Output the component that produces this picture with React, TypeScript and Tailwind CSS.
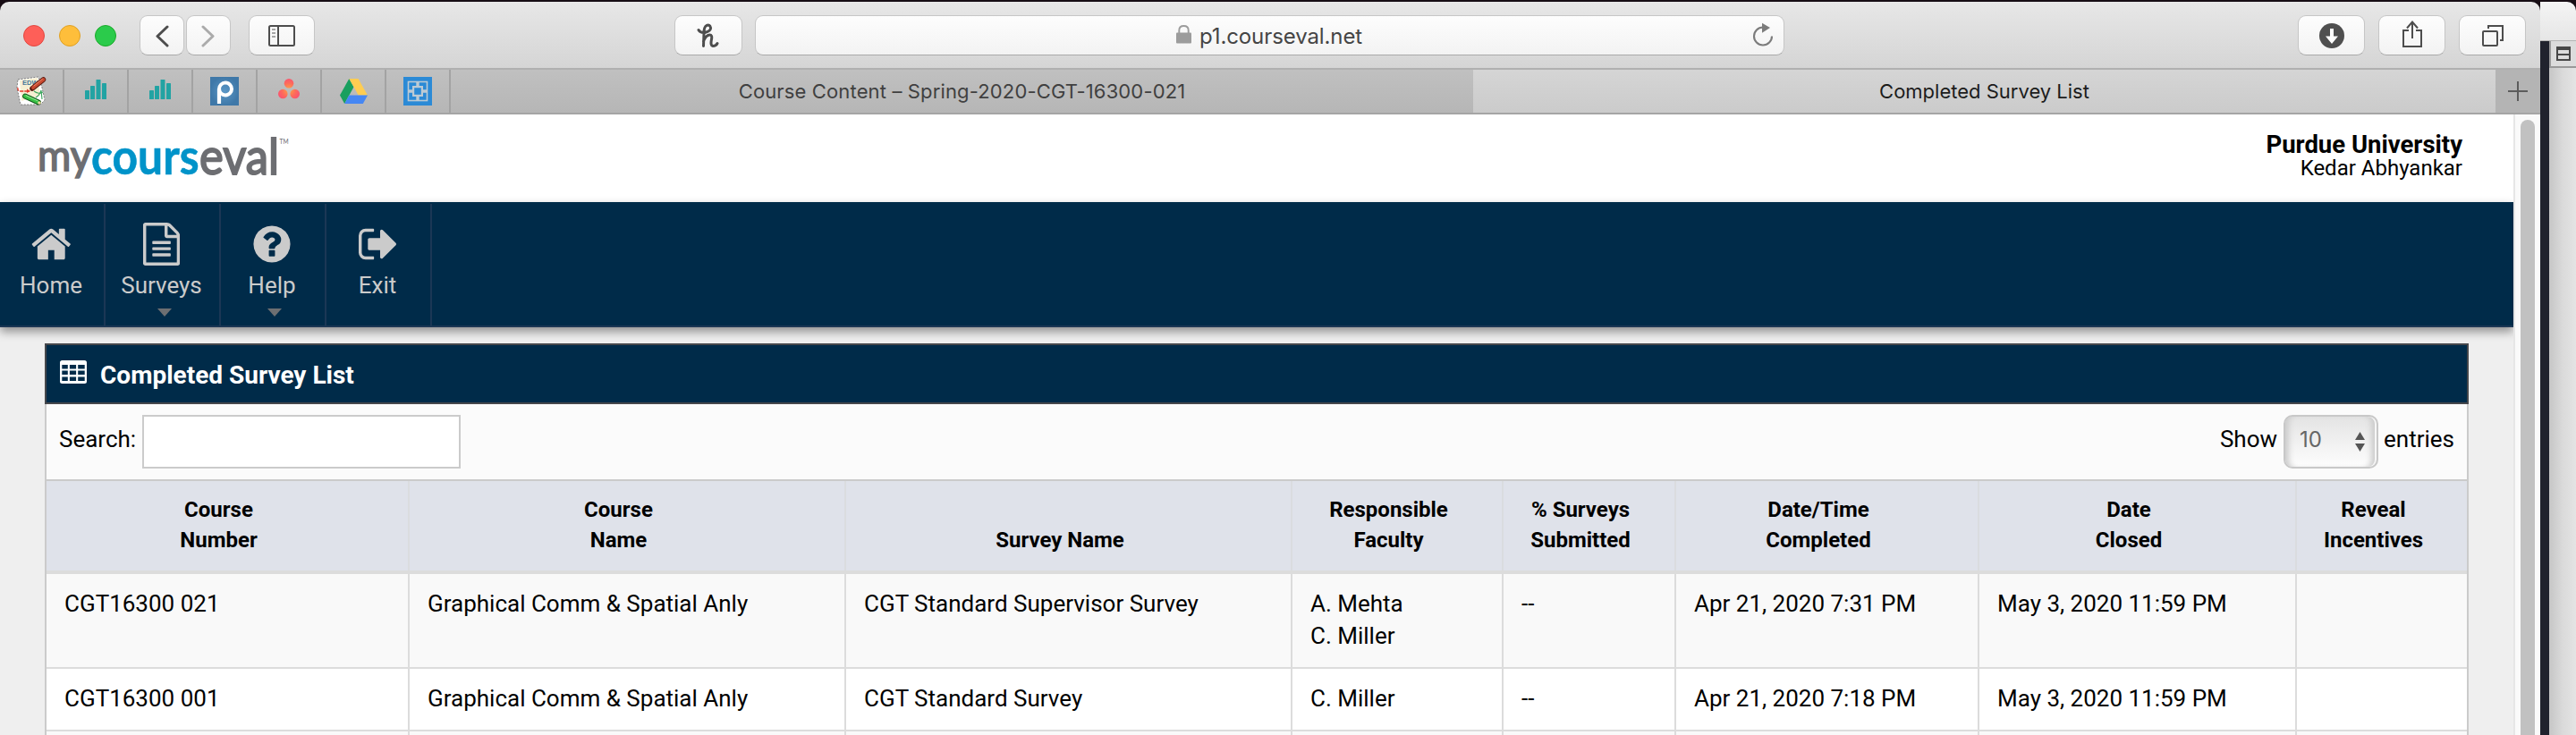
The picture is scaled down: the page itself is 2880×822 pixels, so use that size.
import React from "react";

const btn =
  "flex h-[45px] shrink-0 items-center justify-center rounded-[9px] border border-[#c6c6c6] border-b-[#a9a9a9] bg-linear-to-b from-[#fdfdfd] to-[#f3f3f3]";

const tabIcon =
  "flex w-[72px] shrink-0 items-center justify-center border-r-2 border-[#a3a3a3]";

function BarsIcon() {
  return (
    <svg width="24" height="22" viewBox="0 0 24 22" fill="#22a3a3" className="-mt-1">
      <rect x="0" y="12" width="5" height="10" rx=".6" />
      <rect x="6" y="7" width="5" height="15" rx=".6" />
      <rect x="12.500" y="0" width="5" height="22" rx=".6" />
      <rect x="19" y="4" width="5" height="18" rx=".6" />
    </svg>
  );
}

function EdwIcon() {
  return (
    <svg width="34" height="34" viewBox="0 0 34 34">
      <path d="M2 4 25 1l4 12 3 14-5 5H5L1 13z" fill="#fff" stroke="#555" strokeWidth=".7" strokeDasharray="2 1.500" />
      <path d="M4 5 24 2l3 20-21 6z" fill="#f6efd2" />
      <text x="7" y="9.500" fontSize="7.500" fontWeight="700" fontFamily="Liberation Sans, sans-serif" fill="#47789a">EDW</text>
      <path d="M2 13q-1 4 4 4h9" fill="none" stroke="#e2382a" strokeWidth="1.300" strokeDasharray="4 1" />
      <path d="M12 14.500 16 17l-4 2z" fill="#e2382a" />
      <path d="M20 17q5 4 10 1M22 24q4-2 6-8l1 10" fill="none" stroke="#3aa55c" strokeWidth="1.100" />
      <path d="M18 14 30.500 4" stroke="#5a1a10" strokeWidth="5.500" strokeLinecap="round" />
      <path d="M19 13 30.500 4" stroke="#c9492f" strokeWidth="3.800" strokeLinecap="round" />
      <path d="M20 11 29.500 3.300" stroke="#e98a6d" strokeWidth="1" strokeLinecap="round" />
      <path d="M10 22.500 25 29.500" stroke="#135a1c" strokeWidth="5.800" strokeLinecap="round" />
      <path d="M10 22.500 24 29" stroke="#38c044" strokeWidth="4" strokeLinecap="round" />
      <path d="M11 21.700 24 27.700" stroke="#9cee9c" strokeWidth="1" strokeLinecap="round" />
      <circle cx="26" cy="30" r="1.800" fill="#f1d9a0" />
    </svg>
  );
}

function PIcon() {
  return (
    <svg width="32" height="32" viewBox="0 0 32 32">
      <defs>
        <radialGradient id="pg">
          <stop offset="0" stopColor="#5a97c6" />
          <stop offset="1" stopColor="#3f78a8" />
        </radialGradient>
      </defs>
      <rect width="32" height="32" fill="url(#pg)" />
      <circle cx="17" cy="13.500" r="7" fill="none" stroke="#fff" strokeWidth="4" />
      <path d="M10 13.500V30" stroke="#fff" strokeWidth="4.200" />
    </svg>
  );
}

function DotsIcon() {
  return (
    <svg width="24" height="23" viewBox="0 0 24 23" className="-mt-[5px]">
      <defs>
        <radialGradient id="dg" gradientUnits="userSpaceOnUse" cx="12" cy="12.500" r="13">
          <stop offset="0" stopColor="#ffa642" />
          <stop offset=".6" stopColor="#fd6a5c" />
          <stop offset="1" stopColor="#f95470" />
        </radialGradient>
      </defs>
      <g fill="url(#dg)">
        <circle cx="12" cy="5.300" r="5.300" />
        <circle cx="5.300" cy="17" r="5.300" />
        <circle cx="18.700" cy="17" r="5.300" />
      </g>
    </svg>
  );
}

function DriveIcon() {
  return (
    <svg width="31" height="28" viewBox="0 0 31 28">
      <path d="M10.300 0 0 18.500 5.200 28 15.500 9.200z" fill="#189f5f" />
      <path d="M10.300 0h10.300L31 18.500H20.700z" fill="#fecd52" />
      <path d="M10.200 18.500H31L25.800 28H5.200z" fill="#4687f3" />
    </svg>
  );
}

function GridIcon() {
  return (
    <svg width="32" height="32" viewBox="0 0 32 32" fill="#2b8ad6">
      <rect width="32" height="32" />
      <rect x="4.700" y="4.700" width="22.600" height="22.600" fill="#bccad4" />
      <path d="M6.300 6.300h8V10H10v4.300H6.300zM25.700 6.300h-8V10H22v4.300h3.700zM6.300 25.700h8V22H10v-4.300H6.300zM25.700 25.700h-8V22H22v-4.300h3.700z" />
      <rect x="12.200" y="12.200" width="7.600" height="7.600" />
    </svg>
  );
}

const glyphs: Record<string, { w: number; d: string }> = {
  home: {
    w: 1664,
    d: "M1408 992v480q0 26-19 45t-45 19h-384v-384h-256v384h-384q-26 0-45-19t-19-45v-480q0-1 .5-3t.5-3l575-474 575 474q1 2 1 6zm223-69l-62 74q-8 9-21 11h-3q-13 0-21-7l-692-577-692 577q-12 8-24 7-13-2-21-11l-62-74q-8-10-7-23.5t11-21.5l719-599q32-26 76-26t76 26l244 204v-195q0-14 9-23t23-9h192q14 0 23 9t9 23v408l219 182q10 8 11 21.5t-7 23.5z",
  },
  file: {
    w: 1536,
    d: "M1468 380q28 28 48 76t20 88v1152q0 40-28 68t-68 28h-1344q-40 0-68-28t-28-68v-1600q0-40 28-68t68-28h896q40 0 88 20t76 48zm-444-244v376h376q-10-29-22-41l-313-313q-12-12-41-22zm384 1528v-1024h-416q-40 0-68-28t-28-68v-416h-768v1536h1280zm-1024-864q0-14 9-23t23-9h704q14 0 23 9t9 23v64q0 14-9 23t-23 9h-704q-14 0-23-9t-9-23v-64zm736 224q14 0 23 9t9 23v64q0 14-9 23t-23 9h-704q-14 0-23-9t-9-23v-64q0-14 9-23t23-9h704zm0 256q14 0 23 9t9 23v64q0 14-9 23t-23 9h-704q-14 0-23-9t-9-23v-64q0-14 9-23t23-9h704z",
  },
  help: {
    w: 1792,
    d: "M1024 1376v-192q0-14-9-23t-23-9h-192q-14 0-23 9t-9 23v192q0 14 9 23t23 9h192q14 0 23-9t9-23zm256-672q0-88-55.5-163t-138.5-116-170-41q-243 0-371 213-15 24 8 42l132 100q7 6 19 6 16 0 25-12 53-68 86-92 34-24 86-24 48 0 85.5 26t37.5 59q0 38-20 61t-68 45q-63 28-115.5 86.500t-52.500 125.500v36q0 14 9 23t23 9h192q14 0 23-9t9-23q0-19 21.500-49.500t54.500-49.500q32-18 49-28.500t46-35 44.500-48 28-60.500 12.500-81zm384 192q0 209-103 385.500t-279.500 279.500-385.500 103-385.500-103-279.500-279.500-103-385.500 103-385.500 279.500-279.500 385.500-103 385.500 103 279.500 279.500 103 385.500z",
  },
  exit: {
    w: 1568,
    d: "M640 1440q0 4 1 20t.5 26.5-3 23.5-10 19.5-20.5 6.5h-320q-119 0-203.5-84.5t-84.5-203.5v-704q0-119 84.5-203.5t203.5-84.5h320q13 0 22.5 9.5t9.5 22.5q0 4 1 20t.5 26.5-3 23.5-10 19.5-20.5 6.5h-320q-66 0-113 47t-47 113v704q0 66 47 113t113 47h312l11.5 1 11.5 3 8 5.5 7 9 2 13.5zm928-544q0 26-19 45l-544 544q-19 19-45 19t-45-19-19-45v-288h-448q-26 0-45-19t-19-45v-384q0-26 19-45t45-19h448v-288q0-26 19-45t45-19 45 19l544 544q19 19 19 45z",
  },
};

function NavItem({ icon, label, width, caret }: { icon: string; label: string; width: string; caret?: boolean }) {
  const g = glyphs[icon];
  return (
    <div className={`${width} flex h-full shrink-0 flex-col items-center border-r-2 border-[#1b3755] pt-[21px] pr-[2px]`}>
      <svg height="48" width={(g.w * 48) / 1792} viewBox={`0 0 ${g.w} 1792`} fill="#cbcbcb" className="shrink-0">
        <path d={g.d} />
      </svg>
      <span className="mt-[7px] text-[26px] leading-[30px] text-[#cbcbcb]">{label}</span>
      {caret && (
        <svg width="16" height="9" viewBox="0 0 16 9" fill="#6d6f72" className="mt-[11px] ml-[6px] shrink-0">
          <path d="M0 0h16L8 9z" />
        </svg>
      )}
    </div>
  );
}

function Logo() {
  return (
    <svg width="284" height="88" viewBox="40 128 284 88" className="shrink-0 overflow-visible" fontFamily="Lato, sans-serif">
      <text x="42" y="190.500" fontSize="49" fill="#6d6e72" stroke="#6d6e72" strokeWidth="1.700" textLength="60" lengthAdjust="spacingAndGlyphs">my</text>
      <text x="223" y="194.500" fontSize="57" fill="#6d6e72" stroke="#6d6e72" strokeWidth="2" textLength="89" lengthAdjust="spacingAndGlyphs">eval</text>
      <text x="102" y="194.500" fontSize="55" fontWeight="700" fill="#0093c9" stroke="#0093c9" strokeWidth=".6" textLength="120.500" lengthAdjust="spacingAndGlyphs">cours</text>
      <text x="312.500" y="161" fontSize="8" fill="#6d6e72" textLength="10" lengthAdjust="spacingAndGlyphs">TM</text>
    </svg>
  );
}

const cols = "grid grid-cols-[406px_488px_499px_236px_193px_339px_355px_190px]";

const heads = [
  ["Course", "Number"],
  ["Course", "Name"],
  ["Survey Name"],
  ["Responsible", "Faculty"],
  ["% Surveys", "Submitted"],
  ["Date/Time", "Completed"],
  ["Date", "Closed"],
  ["Reveal", "Incentives"],
];

const rows = [
  [["CGT16300 021"], ["Graphical Comm & Spatial Anly"], ["CGT Standard Supervisor Survey"], ["A. Mehta", "C. Miller"], ["--"], ["Apr 21, 2020 7:31 PM"], ["May 3, 2020 11:59 PM"], []],
  [["CGT16300 001"], ["Graphical Comm & Spatial Anly"], ["CGT Standard Survey"], ["C. Miller"], ["--"], ["Apr 21, 2020 7:18 PM"], ["May 3, 2020 11:59 PM"], []],
  [[], [], [], [], [], [], [], []],
];

function Toolbar() {
  return (
    <div className="flex h-[76px] shrink-0 items-start rounded-t-[10px] border-b-2 border-[#b0b0b0] bg-linear-to-b from-[#e7e7e7] to-[#d5d5d5] pt-[15px]">
      <div className="ml-[26px] flex h-[45px] items-center gap-4">
        <i className="size-6 rounded-full border border-[#e2463f] bg-[#fe5f58]" />
        <i className="size-6 rounded-full border border-[#dfa023] bg-[#febe3b]" />
        <i className="size-6 rounded-full border border-[#1aab29] bg-[#2bcb4b]" />
      </div>
      <div className={`${btn} ml-[26px] w-[50px]`}>
        <svg width="16" height="26" viewBox="0 0 16 26" fill="none" stroke="#4d4d4d" strokeWidth="3" strokeLinecap="round" strokeLinejoin="round">
          <path d="M14 3 3 13.500 14 24" />
        </svg>
      </div>
      <div className={`${btn} ml-[2px] w-[50px]`}>
        <svg width="16" height="26" viewBox="0 0 16 26" fill="none" stroke="#ababab" strokeWidth="3" strokeLinecap="round" strokeLinejoin="round">
          <path d="M2 3l11 10.500L2 24" />
        </svg>
      </div>
      <div className={`${btn} ml-[20px] w-[74px]`}>
        <svg width="30" height="24" viewBox="0 0 30 24" fill="none" stroke="#4d4d4d" strokeWidth="2">
          <rect x="1" y="1" width="28" height="22" rx="1.500" />
          <path d="M11 1v22" />
          <path d="M4 5h4M4 9h4M4 13h4" stroke="#8a8a8a" strokeWidth="1.600" />
        </svg>
      </div>
      <div className={`${btn} ml-[402px] w-[76px]`}>
        <svg width="26" height="28" viewBox="0 0 26 28" fill="none" stroke="#4d4d4d" strokeWidth="3" strokeLinecap="round">
          <path d="M2 7.500q2 3.500 7 3Q16 8.500 15.500 5 14.500 1 11 2.500 8 4 8 11L7.500 25.500M7.500 20q3-7 7-7 3 0 2 5-1.500 7 1.500 7.500 3.500 0 5-3" />
        </svg>
      </div>
      <div className={`${btn} relative ml-[14px] w-[1151px] pr-[1px]`}>
        <div className="flex items-center gap-[9px] pt-[2px]">
          <svg width="17" height="21" viewBox="0 0 17 21" fill="#9c9c9c" className="-mt-1">
            <rect x="0" y="8.500" width="17" height="12" rx="1" />
            <path d="M3.300 9V6q0-5 5.200-5t5.200 5v3" fill="none" stroke="#9c9c9c" strokeWidth="1.900" />
          </svg>
          <span className="font-['Inter'] text-[24px] leading-[30px] tracking-[-0.1px] text-[#454545]">p1.courseval.net</span>
        </div>
        <svg width="24" height="28" viewBox="0 0 24 28" className="absolute top-[7px] right-[11px]">
          <path d="M12 6.500A10 10 0 1 0 22 16.500" transform="translate(0 -1)" fill="none" stroke="#7c7c7c" strokeWidth="2.100" />
          <path d="M11 .8v11L20 6z" fill="#7c7c7c" />
        </svg>
      </div>
      <div className={`${btn} ml-[574px] w-[75px]`}>
        <svg width="28" height="28" viewBox="0 0 28 28">
          <circle cx="14" cy="14" r="14" fill="#4f4f4f" />
          <path d="M12 6h4v8.500h5L14 23l-7-8.500h5z" fill="#fff" />
        </svg>
      </div>
      <div className={`${btn} ml-[15px] w-[75px]`}>
        <svg width="24" height="30" viewBox="0 0 24 30" fill="none" stroke="#4d4d4d" strokeWidth="2" className="-mt-1">
          <path d="M8 11H2v18h20V11h-6M12 20V2M6 8.500l6-7 6 7" />
        </svg>
      </div>
      <div className={`${btn} ml-[15px] w-[75px]`}>
        <svg width="24" height="24" viewBox="0 0 24 24" fill="none" stroke="#4d4d4d" strokeWidth="2">
          <rect x="1" y="7" width="16" height="16" rx="1" />
          <path d="M7 4V1h16v16h-3" />
        </svg>
      </div>
    </div>
  );
}

function TabBar() {
  return (
    <div className="flex h-[50px] shrink-0 border-b-2 border-[#a5a5a5] bg-linear-to-b from-[#c0c0c0] to-[#b6b6b6] font-['Inter'] text-[22px]">
      <div className={tabIcon}><EdwIcon /></div>
      <div className={tabIcon}><BarsIcon /></div>
      <div className={tabIcon}><BarsIcon /></div>
      <div className={tabIcon}><PIcon /></div>
      <div className={tabIcon}><DotsIcon /></div>
      <div className={tabIcon}><DriveIcon /></div>
      <div className={tabIcon}><GridIcon /></div>
      <div className="flex w-[1143px] items-center justify-center pt-px tracking-[0.14px] text-[#404040]">
        Course Content – Spring-2020-CGT-16300-021
      </div>
      <div className="flex w-[1143px] items-center justify-center bg-linear-to-b from-[#d5d5d5] to-[#cbcbcb] pt-px text-[#1c1c1c]">
        Completed Survey List
      </div>
      <div className="flex w-[50px] items-center justify-center bg-[#b4b4b4]">
        <svg width="22" height="22" viewBox="0 0 22 22" stroke="#5c5c5c" strokeWidth="2">
          <path d="M0 11h22M11 0v22" />
        </svg>
      </div>
    </div>
  );
}

function Panel() {
  return (
    <div className="mt-[18px] ml-[50px] flex w-[2710px] flex-col">
      <div className="flex h-[68px] items-center border-2 border-[#46474b] bg-[#002b49] pl-[15px]">
        <svg width="30" height="26" viewBox="0 0 30 26" fill="#fff" fillRule="evenodd" className="-mt-[5px]">
          <path d="M2.500 0h25A2.500 2.500 0 0 1 30 2.500v21A2.500 2.500 0 0 1 27.500 26h-25A2.500 2.500 0 0 1 0 23.500v-21A2.500 2.500 0 0 1 2.500 0zM2.300 5v4.500h6.500V5zm8.600 0v4.500h7.200V5zm9.300 0v4.500h7.500V5zM2.300 11.500V16h6.500v-4.500zm8.600 0V16h7.200v-4.500zm9.300 0V16h7.500v-4.500zM2.300 18.500v4.500h6.500v-4.500zm8.600 0v4.500h7.200v-4.500zm9.300 0v4.500h7.500v-4.500z" />
        </svg>
        <h2 className="mt-[4px] ml-[15px] text-[28px] font-bold text-white">Completed Survey List</h2>
      </div>
      <div className="flex h-[84px] shrink-0 justify-between border-x-2 border-[#cbcbcb] bg-[#fbfbfb] pt-[12px] pr-[14px] pl-[14px] text-[26px] text-black">
        <label className="flex items-start gap-[7px]">
          <span className="leading-[54px]">Search:</span>
          <input className="h-[60px] w-[356px] border-2 border-[#cbcbcb] bg-white" />
        </label>
        <div className="flex items-start">
          <span className="leading-[54px]">Show</span>
          <div className="mr-[6px] ml-[7px] flex h-[60px] w-[106px] items-center justify-between rounded-[10px] border-2 border-[#c8c8c8] bg-linear-to-b from-[#e4e4e4] to-[#fdfdfd] pr-[13px] pl-[16px] shadow-[inset_8px_0_6px_-4px_#cccccc,inset_-2px_0_0_#f6f6f6,inset_-10px_0_6px_-4px_#cccccc]">
            <span className="-mt-1 font-['Inter'] text-[24px] leading-[30px] text-[#666]">10</span>
            <svg width="11" height="22" viewBox="0 0 11 22" fill="#555">
              <path d="M0 9 5.500 0 11 9zM0 13h11l-5.500 9z" />
            </svg>
          </div>
          <span className="leading-[54px]">entries</span>
        </div>
      </div>
      <div className="border-2 border-b-0 border-[#cbcbcb]">
        <div className={`${cols} h-[104px] border-b-4 border-[#dcdcdc] bg-[#dfe2ea]`}>
          {heads.map((h, i) => (
            <div key={i} className="flex flex-col items-center justify-end border-r-2 border-[#dadcdf] pr-[19px] pb-[17px] text-[24px] leading-[34px] font-bold text-black last:border-r-0">
              {h.map((t) => (
                <span key={t}>{t}</span>
              ))}
            </div>
          ))}
        </div>
        {rows.map((r, i) => (
          <div key={i} className={`${cols} border-b-2 border-[#dcdcdc] odd:bg-white even:bg-[#f9f9f9]`}>
            {r.map((c, j) => (
              <div key={j} className="border-r-2 border-[#dcdcdc] px-[20px] pt-[15px] pb-[17px] text-[26px] leading-[36px] whitespace-nowrap text-black last:border-r-0">
                {c.map((t) => (
                  <div key={t}>{t}</div>
                ))}
              </div>
            ))}
          </div>
        ))}
      </div>
    </div>
  );
}

export default function App() {
  return (
    <div className="flex h-[822px] w-[2880px] overflow-hidden bg-[#170d14] pt-[2px] font-['Roboto',sans-serif]">
      <div className="flex h-[820px] w-[2840px] shrink-0 flex-col">
        <Toolbar />
        <TabBar />
        <div className="flex h-[694px]">
          <div className="flex w-[2810px] shrink-0 flex-col overflow-hidden bg-[#efefef]">
            <header className="flex h-[98px] shrink-0 justify-between bg-white pr-[57px] pl-[40px]">
              <Logo />
              <div className="pt-[22px] text-right text-black">
                <div className="text-[27.5px] leading-[23px] font-bold">Purdue University</div>
                <div className="text-[24px] leading-[30px]">Kedar Abhyankar</div>
              </div>
            </header>
            <nav className="z-10 flex h-[140px] shrink-0 border-b-2 border-[#1b3755] bg-[#002b49] pt-[2px] shadow-[0_5px_10px_rgba(0,0,0,0.4)]">
              <NavItem icon="home" label="Home" width="w-[118px]" />
              <NavItem icon="file" label="Surveys" width="w-[129px]" caret />
              <NavItem icon="help" label="Help" width="w-[118px]" caret />
              <NavItem icon="exit" label="Exit" width="w-[118px]" />
            </nav>
            <Panel />
          </div>
          <div className="flex w-[30px] justify-end border-l-2 border-[#e6e6e6] bg-[#fafafa] pt-[6px] pr-[6px]">
            <div className="h-full w-4 rounded-t-full bg-[#c1c1c1]" />
          </div>
        </div>
      </div>
      <div className="flex h-[820px] w-[40px] flex-col">
        <div className="h-[44px] shrink-0 rounded-tr-[10px] border-b border-[#b5b5b5] bg-linear-to-b from-[#f4f4f4] to-[#e6e6e6]" />
        <div className="flex flex-1">
          <div className="w-[10px] bg-[#20222d]" />
          <div className="flex w-[30px] flex-col">
            <div className="flex h-[30px] items-center border-b-2 border-l-2 border-[#999] bg-[#dcdcdc] pl-[6px]">
              <svg width="16" height="16" viewBox="0 0 16 16" fill="none" stroke="#474747" strokeWidth="2">
                <path d="M1 1h14v14H1zM1 3h14M1 9h14" />
              </svg>
            </div>
            <div className="flex-1 bg-linear-to-r from-[#c6c6c6] via-[#dadada] to-[#e4e4e4]" />
          </div>
        </div>
      </div>
    </div>
  );
}
